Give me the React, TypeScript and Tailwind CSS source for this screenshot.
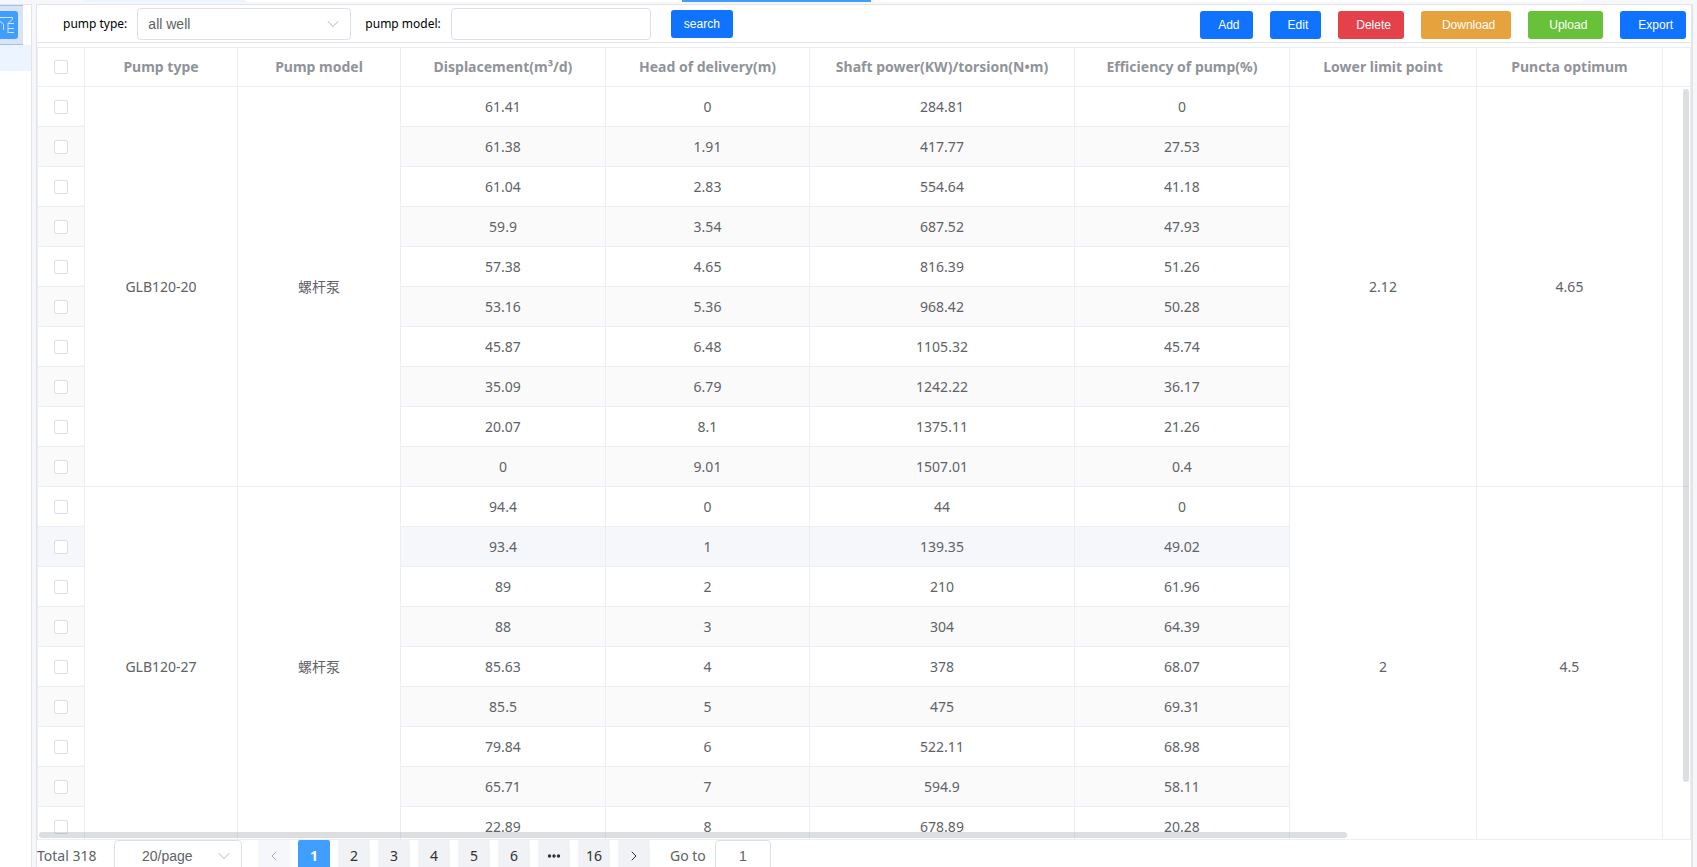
import React from "react";
import { ChevronDown, ChevronLeft, ChevronRight } from "lucide-react";

type Group = {
  type: string;
  model: string;
  lower: string;
  optimum: string;
  rows: string[][];
};

const groups: Group[] = [
  {
    type: "GLB120-20",
    model: "螺杆泵",
    lower: "2.12",
    optimum: "4.65",
    rows: [
      ["61.41", "0", "284.81", "0"],
      ["61.38", "1.91", "417.77", "27.53"],
      ["61.04", "2.83", "554.64", "41.18"],
      ["59.9", "3.54", "687.52", "47.93"],
      ["57.38", "4.65", "816.39", "51.26"],
      ["53.16", "5.36", "968.42", "50.28"],
      ["45.87", "6.48", "1105.32", "45.74"],
      ["35.09", "6.79", "1242.22", "36.17"],
      ["20.07", "8.1", "1375.11", "21.26"],
      ["0", "9.01", "1507.01", "0.4"],
    ],
  },
  {
    type: "GLB120-27",
    model: "螺杆泵",
    lower: "2",
    optimum: "4.5",
    rows: [
      ["94.4", "0", "44", "0"],
      ["93.4", "1", "139.35", "49.02"],
      ["89", "2", "210", "61.96"],
      ["88", "3", "304", "64.39"],
      ["85.63", "4", "378", "68.07"],
      ["85.5", "5", "475", "69.31"],
      ["79.84", "6", "522.11", "68.98"],
      ["65.71", "7", "594.9", "58.11"],
      ["22.89", "8", "678.89", "20.28"],
    ],
  },
];

const headers = [
  "Pump type",
  "Pump model",
  "Displacement(m³/d)",
  "Head of delivery(m)",
  "Shaft power(KW)/torsion(N•m)",
  "Efficiency of pump(%)",
  "Lower limit point",
  "Puncta optimum",
  "",
];

const actions = [
  { label: "Add", style: "bg-[#1073ff] pl-[18px] pr-[13px]" },
  { label: "Edit", style: "bg-[#1073ff] pl-[18px] pr-[13px]" },
  { label: "Delete", style: "bg-[#e4414b] pl-[18px] pr-[13px]" },
  { label: "Download", style: "bg-[#e6a23c] pl-[21px] pr-4" },
  { label: "Upload", style: "bg-[#67c23a] pl-[21px] pr-4" },
  { label: "Export", style: "bg-[#1073ff] pl-[18px] pr-[13px]" },
];

const cell = "border-b border-r border-[#ebeef5] p-0 text-center";

function Check({ label }: { label: string }) {
  return (
    <input
      type="checkbox"
      aria-label={label}
      className="block mx-auto size-3.5 appearance-none rounded-xs border border-[#dcdfe6] bg-white checked:bg-[#409eff]"
    />
  );
}

function PumpTable() {
  return (
    <table className="w-[1840px] table-fixed border-separate border-spacing-0 text-sm text-[#606266]">
      <colgroup>
        <col className="w-[47px]" />
        <col className="w-[153px]" />
        <col className="w-[163px]" />
        <col className="w-[205px]" />
        <col className="w-[204px]" />
        <col className="w-[265px]" />
        <col className="w-[215px]" />
        <col className="w-[187px]" />
        <col className="w-[186px]" />
        <col />
      </colgroup>
      <thead>
        <tr className="h-[39px] text-[#909399]">
          <th className={cell}>
            <Check label="Select all" />
          </th>
          {headers.map((h, i) => (
            <th key={i} className={`${cell} font-bold`}>
              {h}
            </th>
          ))}
        </tr>
      </thead>
      <tbody>
        {groups.map((g, gi) =>
          g.rows.map((r, i) => {
            const bg =
              gi === 1 && i === 1 ? "bg-[#f5f7fa]" : i % 2 ? "bg-[#fafafa]" : "bg-white";
            return (
              <tr key={`${g.type}-${i}`} className="h-10">
                <td className={`${cell} ${bg}`}>
                  <Check label={`Select ${g.type} row ${i + 1}`} />
                </td>
                {i === 0 && (
                  <>
                    <td rowSpan={g.rows.length} className={cell}>{g.type}</td>
                    <td rowSpan={g.rows.length} className={cell}>{g.model}</td>
                  </>
                )}
                {r.map((v, k) => (
                  <td key={k} className={`${cell} ${bg}`}>{v}</td>
                ))}
                {i === 0 && (
                  <>
                    <td rowSpan={g.rows.length} className={cell}>{g.lower}</td>
                    <td rowSpan={g.rows.length} className={cell}>{g.optimum}</td>
                    <td rowSpan={g.rows.length} className={cell} />
                  </>
                )}
              </tr>
            );
          })
        )}
      </tbody>
    </table>
  );
}

function TabStrip() {
  return (
    <div className="h-1 shrink-0 bg-[#f5f7fa]">
      <div className="flex h-0.5">
        <div className="w-[84px]" />
        <div className="w-[162px] bg-[#ecf5ff]" />
        <div className="w-[436px] bg-white" />
        <div className="w-[189px] bg-[#409eff]" />
        <div className="mr-[114px] flex-1 bg-white" />
      </div>
    </div>
  );
}

function Toolbar() {
  return (
    <form
      className="flex h-[38px] shrink-0 items-center border-b border-[#e4e4e4] pt-px pr-[5px] pl-[26px]"
      onSubmit={(e) => e.preventDefault()}
    >
      <label htmlFor="pump-type" className="mr-2.5 text-xs text-black">pump type:</label>
      <div className="relative mr-3.5 w-[214px]">
        <select
          id="pump-type"
          className="block h-8 w-full appearance-none rounded border border-[#dcdfe6] bg-white px-2.5 font-['Liberation_Sans',Arial,sans-serif] text-sm text-[#606266]"
        >
          <option>all well</option>
        </select>
        <ChevronDown className="pointer-events-none absolute top-1.5 right-2 size-5 text-[#c0c4cc]" strokeWidth={1.25} />
      </div>
      <label htmlFor="pump-model" className="mr-2.5 text-xs text-black">pump model:</label>
      <input id="pump-model" type="text" className="h-8 w-[200px] rounded border border-[#dcdfe6] bg-white px-3 text-sm" />
      <button
        type="submit"
        className="ml-5 h-7 w-[62px] rounded-[3px] bg-[#1073ff] font-['Liberation_Sans',Arial,sans-serif] text-xs text-white"
      >
        search
      </button>
      <div className="ml-auto flex gap-[17px] pt-0.5">
        {actions.map((a) => (
          <button
            key={a.label}
            type="button"
            className={`h-7 rounded-[3px] font-['Liberation_Sans',Arial,sans-serif] text-xs text-white ${a.style}`}
          >
            {a.label}
          </button>
        ))}
      </div>
    </form>
  );
}

function Pagination() {
  const page = "flex size-8 items-center justify-center rounded-xs bg-[#f0f2f5] text-[#303133]";
  return (
    <nav aria-label="Pagination" className="flex h-[27px] shrink-0 items-start text-sm text-[#606266]">
      <span className="w-[77px] leading-8">Total 318</span>
      <div className="relative mr-4 w-32">
        <select
          aria-label="Page size"
          className="block h-8 w-full appearance-none rounded border border-[#dcdfe6] bg-white pl-[27px] font-['Liberation_Sans',Arial,sans-serif] text-sm text-[#606266]"
        >
          <option>20/page</option>
        </select>
        <ChevronDown className="pointer-events-none absolute top-1.5 right-2 size-5 text-[#c0c4cc]" strokeWidth={1.25} />
      </div>
      <div className="flex gap-2">
        <button type="button" aria-label="Previous page" className="flex size-8 items-center justify-center rounded-xs bg-[#f5f7fa] text-[#a8abb2]">
          <ChevronLeft className="size-4" strokeWidth={1.5} />
        </button>
        <button type="button" aria-current="page" className="size-8 rounded-xs bg-[#409eff] font-bold text-white">1</button>
        {["2", "3", "4", "5", "6"].map((n) => (
          <button key={n} type="button" className={page}>{n}</button>
        ))}
        <button type="button" aria-label="More pages" className={page}>
          <svg viewBox="0 0 14 14" className="size-3.5" fill="currentColor">
            <circle cx="2.5" cy="7" r="1.7" />
            <circle cx="7" cy="7" r="1.7" />
            <circle cx="11.5" cy="7" r="1.7" />
          </svg>
        </button>
        <button type="button" className={page}>16</button>
        <button type="button" aria-label="Next page" className={page}>
          <ChevronRight className="size-4" strokeWidth={1.5} />
        </button>
      </div>
      <label htmlFor="goto" className="mr-[9px] ml-5 leading-8">Go to</label>
      <input
        id="goto"
        type="text"
        defaultValue="1"
        className="h-8 w-14 rounded border border-[#dcdfe6] bg-white text-center font-['Liberation_Sans',Arial,sans-serif] text-sm text-[#606266]"
      />
    </nav>
  );
}

export default function App() {
  return (
    <div className="flex h-screen flex-col overflow-hidden bg-[#f5f7fa] font-['Noto_Sans','Noto_Sans_CJK_SC',sans-serif]">
      <TabStrip />
      <div className="flex min-h-0 flex-1">
        <aside className="mr-1 w-8 shrink-0 border-t border-r border-[#e4e4e4] bg-white">
          <div className="flex h-10 w-[23px] items-center border-y border-[#a3c0ea] bg-[#d8e3f3]">
            <button type="button" aria-label="Filter wells" className="flex h-7 w-[18px] items-center rounded-r-[3px] bg-[#409eff]">
              <svg viewBox="0 0 18 28" className="h-7 w-[18px]" fill="none" stroke="#cfe6ff" strokeWidth="1">
                <path d="M0 6.5H12.5V8L8 12.5V22M0 10.5L3.5 13V19M8 12.5H14M8 17.5H14M8 21.5H14" />
              </svg>
            </button>
          </div>
          <div className="h-[26px] bg-[#ecf5ff]" />
        </aside>
        <main className="mr-1 flex min-w-0 flex-1 flex-col border-t border-r-2 border-l border-[#e4e4e4] bg-white">
          <Toolbar />
          <div className="relative mt-1 min-h-0 flex-1 overflow-hidden border border-[#ebeef5]">
            <PumpTable />
            <div className="absolute top-[41px] right-px h-[693px] w-1.5 rounded-full bg-[#909399]/30" />
            <div className="absolute bottom-px left-px h-1.5 w-[1308px] rounded-full bg-[#909399]/30" />
          </div>
          <Pagination />
        </main>
      </div>
    </div>
  );
}
